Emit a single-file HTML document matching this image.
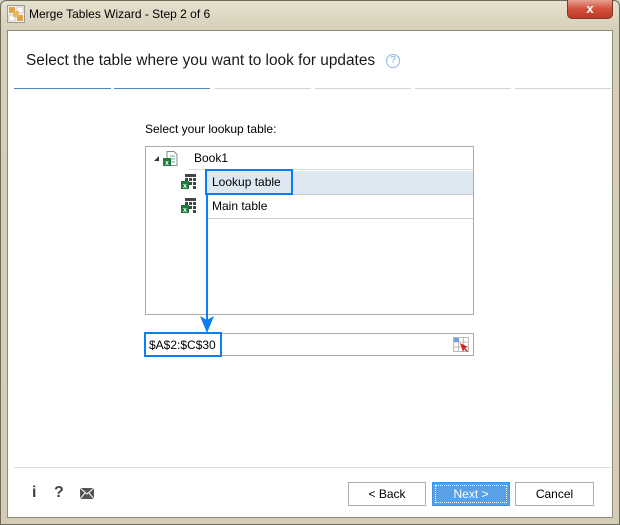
<!DOCTYPE html>
<html><head><style>
*{margin:0;padding:0;box-sizing:border-box}
body{width:620px;height:525px;overflow:hidden;background:#d9d3c0;font-family:"Liberation Sans",sans-serif;font-size:12px;color:#000;position:relative}
.a{position:absolute}
.frame{left:0;top:0;width:620px;height:525px;background:linear-gradient(#e6e1cf,#d6cfb8 30px,#d4ccb4);border:1px solid #6e6a5c;border-radius:6px 6px 0 0}
.content{left:7px;top:30px;width:606px;height:488px;background:#fff;border:1px solid #8f8b7c}
.seg{top:88px;height:1px;background:#d4d4d4}
.btn{top:482px;height:24px;border:1px solid #adadad;background:#fff;text-align:center;line-height:22px;font-size:12px}
</style></head><body>
<div class="a frame"></div>
<svg class="a" style="left:7px;top:5px" width="18" height="18" viewBox="0 0 18 18"><rect x="0.5" y="0.5" width="17" height="17" fill="#f6f3ea" stroke="#9a9a9a"/><rect x="2" y="2" width="6" height="6" fill="#e2a545"/><rect x="10" y="10" width="6" height="6" fill="#e2a545"/><rect x="10" y="2" width="6" height="6" fill="#fff" stroke="#ccc"/><rect x="2" y="10" width="6" height="6" fill="#fff" stroke="#ccc"/><rect x="6" y="6" width="6" height="6" fill="#e8b560"/></svg>
<div class="a" style="left:29px;top:7px;font-size:12px">Merge Tables Wizard - Step 2 of 6</div>
<div class="a" style="left:567px;top:0;width:46px;height:19px;border:1px solid #7a3a30;border-top:none;border-radius:0 0 5px 5px;background:linear-gradient(#e8a090,#d0503c 50%,#c03826);color:#fff;font-weight:bold;text-align:center;font-size:13px;line-height:17px">x</div>
<div class="a content"></div>
<div class="a" style="left:26px;top:52px;font-size:15.4px;color:#1a1a1a">Select the table where you want to look for updates</div>
<div class="a" style="left:386px;top:54px;width:14px;height:14px;border:1px solid #8fb6e8;border-radius:50%;color:#7aa8e0;font-size:10px;text-align:center;line-height:12px">?</div>
<div class="a seg" style="left:14px;width:97px;background:#4f86c6"></div>
<div class="a seg" style="left:114px;width:96px;background:#4f86c6"></div>
<div class="a seg" style="left:215px;width:96px"></div>
<div class="a seg" style="left:315px;width:96px"></div>
<div class="a seg" style="left:415px;width:96px"></div>
<div class="a seg" style="left:515px;width:96px"></div>
<div class="a" style="left:145px;top:122px">Select your lookup table:</div>
<div class="a" style="left:145px;top:146px;width:329px;height:169px;border:1px solid #ababab"></div>
<div class="a" style="left:154px;top:156px;width:0;height:0;border-left:5px solid transparent;border-bottom:5px solid #333"></div>
<svg class="a" style="left:163px;top:151px" width="16" height="16" viewBox="0 0 16 16"><path d="M4 0.5h7l3 3v11H4z" fill="#fff" stroke="#888"/><path d="M7 5h5M7 8h5M7 11h5" stroke="#6a9" /><rect x="0" y="7" width="8" height="8" fill="#1e7a3c"/><text x="4" y="14" font-size="7" fill="#fff" text-anchor="middle" font-family="Liberation Sans" font-weight="bold">x</text></svg>
<div class="a" style="left:194px;top:151px">Book1</div>
<div class="a" style="left:189px;top:169px;width:284px;height:1px;background:#ddd"></div>
<div class="a" style="left:206px;top:171px;width:267px;height:23px;background:#dde8f3"></div>
<div class="a" style="left:206px;top:194px;width:267px;height:1px;background:#ccc"></div>
<div class="a" style="left:206px;top:218px;width:267px;height:1px;background:#ccc"></div>
<svg class="a" style="left:181px;top:174px" width="16" height="16" viewBox="0 0 16 16"><g fill="#444"><rect x="4" y="0" width="11" height="3"/><rect x="4" y="4" width="3" height="3"/><rect x="8" y="4" width="3" height="3"/><rect x="12" y="4" width="3" height="3"/><rect x="8" y="8" width="3" height="3"/><rect x="12" y="8" width="3" height="3"/><rect x="12" y="12" width="3" height="3"/></g><rect x="0" y="7" width="8" height="8" fill="#1e7a3c"/><text x="4" y="14" font-size="7" fill="#fff" text-anchor="middle" font-family="Liberation Sans" font-weight="bold">x</text></svg>
<svg class="a" style="left:181px;top:198px" width="16" height="16" viewBox="0 0 16 16"><g fill="#444"><rect x="4" y="0" width="11" height="3"/><rect x="4" y="4" width="3" height="3"/><rect x="8" y="4" width="3" height="3"/><rect x="12" y="4" width="3" height="3"/><rect x="8" y="8" width="3" height="3"/><rect x="12" y="8" width="3" height="3"/><rect x="12" y="12" width="3" height="3"/></g><rect x="0" y="7" width="8" height="8" fill="#1e7a3c"/><text x="4" y="14" font-size="7" fill="#fff" text-anchor="middle" font-family="Liberation Sans" font-weight="bold">x</text></svg>
<div class="a" style="left:212px;top:175px">Lookup table</div>
<div class="a" style="left:212px;top:199px">Main table</div>
<div class="a" style="left:205px;top:169px;width:88px;height:26px;border:2px solid #0a7ef2"></div>
<div class="a" style="left:145px;top:333px;width:329px;height:23px;border:1px solid #ababab"></div>
<div class="a" style="left:149px;top:338px">$A$2:$C$30</div>
<div class="a" style="left:144px;top:332px;width:78px;height:25px;border:2px solid #0a7ef2"></div>
<div class="a" style="left:206px;top:194px;width:2px;height:126px;background:#0a7ef2"></div>
<svg class="a" style="left:200px;top:316px" width="14" height="17"><path d="M0 0L7 17L14 0L7 4Z" fill="#0a7ef2"/></svg>
<svg class="a" style="left:453px;top:337px" width="16" height="15" viewBox="0 0 16 15"><g stroke="#bbb" fill="none"><path d="M0.5 0.5h15v14h-15zM0.5 5h15M0.5 10h15M5.5 0v15M10.5 0v15"/></g><rect x="1" y="1" width="5" height="4" fill="#6ea0dc"/><path d="M7 6l8 4-3 1 3 3-1 1-3-3-1 3z" fill="#d42020"/></svg>
<div class="a" style="left:14px;top:467px;width:597px;height:1px;background:#dcdcdc"></div>
<div class="a" style="left:32px;top:484px;font-size:16px;font-weight:bold;color:#444">i</div>
<div class="a" style="left:54px;top:484px;font-size:16px;font-weight:bold;color:#444">?</div>
<svg class="a" style="left:80px;top:488px" width="14" height="11"><rect width="14" height="11" fill="#555"/><path d="M0 0L7 6L14 0M0 11L5 5M14 11L9 5" stroke="#fff" fill="none"/></svg>
<div class="a btn" style="left:348px;width:78px">&lt; Back</div>
<div class="a btn" style="left:432px;width:78px;background:#5aa0e6;border-color:#4a90e0;color:#fff"><div style="position:absolute;left:2px;top:2px;right:2px;bottom:2px;border:1px dotted #fff"></div>Next &gt;</div>
<div class="a btn" style="left:515px;width:79px">Cancel</div>
</body></html>
